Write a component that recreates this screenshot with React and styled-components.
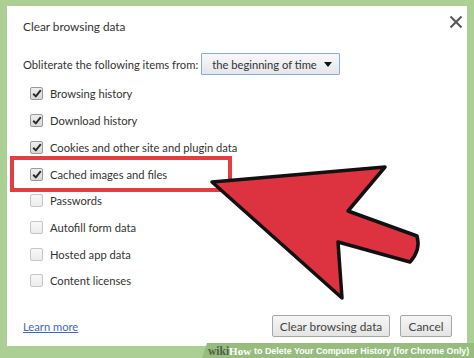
import React from 'react';
import styled, {createGlobalStyle} from 'styled-components';

const GlobalStyle = createGlobalStyle`
  body {
    margin: 0;
    background: #abcf94;
    font-family: Lato, "Open Sans", sans-serif;
  }
`;

const Page = styled.div`
  position: relative;
  width: 474px;
  height: 358px;
  padding: 6px 7px 12px 7px;
  box-sizing: border-box;
  background: #abcf94;
  overflow: hidden;
`;

const Dialog = styled.div`
  position: relative;
  height: 100%;
  background: #fff;
  padding: 0 15px 9px 16px;
  box-sizing: border-box;
  display: flex;
  flex-direction: column;
  color: #333;
  font-family: Lato, "Open Sans", sans-serif;
  font-size: 11.2px;
`;

const Close = styled.div`
  position: absolute;
  top: 9px;
  right: 4px;
  width: 14px;
  height: 14px;
`;

const Title = styled.h1`
  margin: 11px 0 0 0;
  font-size: 11.8px;
  font-weight: 400;
  line-height: 20px;
  color: #333;
`;

const RangeRow = styled.div`
  margin-top: 16px;
  display: flex;
  align-items: center;
  height: 22px;
  gap: 3px;
  white-space: nowrap;
`;

const Select = styled.div`
  width: 139px;
  height: 22px;
  box-sizing: border-box;
  border: 1px solid #8aa9d6;
  border-radius: 1px;
  background: linear-gradient(#f7f8fa, #e4e6ea);
  display: flex;
  align-items: center;
  justify-content: space-between;
  padding: 0 7px 0 10px;
  color: #333;
`;

const Caret = styled.span`
  width: 0;
  height: 0;
  border-left: 4px solid transparent;
  border-right: 4px solid transparent;
  border-top: 5px solid #111;
`;

const List = styled.div`
  margin-top: 5.6px;
  padding-left: 7px;
  display: flex;
  flex-direction: column;
`;

const Row = styled.label`
  position: relative;
  height: 26.7px;
  display: flex;
  align-items: center;
  gap: 7px;
  color: #333;

  ${p => p.$highlight && `
    &::after {
      content: '';
      position: absolute;
      left: -20px;
      top: -5px;
      width: 222px;
      height: 36px;
      border: 4px solid #e33d41;
      box-sizing: border-box;
    }
  `}
`;

const Box = styled.span`
  width: 13px;
  height: 13px;
  box-sizing: border-box;
  border-radius: 2px;
  border: 1px solid ${p => (p.$checked ? '#9a9a9a' : '#c6c6c6')};
  background: ${p => (p.$checked ? 'linear-gradient(#eeeeee, #d8d8d8)' : 'linear-gradient(#f8f8f8, #ececec)')};
  display: flex;
  align-items: center;
  justify-content: center;
`;

const Footer = styled.div`
  margin-top: auto;
  display: flex;
  align-items: center;
  justify-content: space-between;
`;

const Link = styled.a`
  color: #4369b8;
  text-decoration: underline;
`;

const Actions = styled.div`
  display: flex;
  gap: 10px;
`;

const Button = styled.button`
  height: 22px;
  width: ${p => p.$w}px;
  padding: 0;
  border: 1px solid #a6a6a6;
  border-radius: 2px;
  background: linear-gradient(#f6f6f6, #e4e4e4);
  font-family: inherit;
  font-size: 11.8px;
  color: #444;
`;

const Banner = styled.div`
  position: absolute;
  right: 0;
  bottom: 0;
  width: 272px;
  height: 15px;
  background: #96bd7e;
  clip-path: polygon(5px 0, 100% 0, 100% 100%, 0 100%);
  display: flex;
  align-items: center;
  padding-left: 6px;
  box-sizing: border-box;
  font-family: "Liberation Sans", Arial, sans-serif;
  font-weight: 700;
  font-size: 8.9px;
  color: #fff;
  white-space: nowrap;
`;

const Wiki = styled.span`
  font-family: "Liberation Serif", serif;
  font-size: 11.5px;
  color: #4f5e45;
`;

const How = styled.span`
  font-family: "Liberation Serif", serif;
  font-size: 11px;
  margin-right: 3px;
`;

const Overlay = styled.svg`
  position: absolute;
  left: 0;
  top: 0;
  pointer-events: none;
`;

const items = [
  ['Browsing history', true],
  ['Download history', true],
  ['Cookies and other site and plugin data', true],
  ['Cached images and files', true, true],
  ['Passwords', false],
  ['Autofill form data', false],
  ['Hosted app data', false],
  ['Content licenses', false],
];

const Check = () => (
  <svg width="10" height="9" viewBox="0 0 10 9">
    <path d="M1.2 4.8 L3.8 7.4 L8.8 1.2" fill="none" stroke="#2a2a2a" strokeWidth="2" strokeLinejoin="round" />
  </svg>
);

export default function App() {
  return (
    <>
      <GlobalStyle />
      <Page>
        <Dialog>
          <Close>
            <svg width="14" height="14" viewBox="0 0 14 14">
              <path d="M1.5 1.5 L12.5 12.5 M12.5 1.5 L1.5 12.5" stroke="#555" strokeWidth="2" />
            </svg>
          </Close>
          <Title>Clear browsing data</Title>
          <RangeRow>
            Obliterate the following items from:
            <Select>
              the beginning of time
              <Caret />
            </Select>
          </RangeRow>
          <List>
            {items.map(([label, checked, hl]) => (
              <Row key={label} $highlight={hl}>
                <Box $checked={checked}>{checked && <Check />}</Box>
                {label}
              </Row>
            ))}
          </List>
          <Footer>
            <Link href="#">Learn more</Link>
            <Actions>
              <Button $w={118}>Clear browsing data</Button>
              <Button $w={52}>Cancel</Button>
            </Actions>
          </Footer>
        </Dialog>
        <Banner>
          <Wiki>wiki</Wiki>
          <How>How</How>
          to Delete Your Computer History (for Chrome Only)
        </Banner>
        <Overlay width="474" height="358" viewBox="0 0 474 358">
          <path
            d="M212 182 L385 167 L348 211 L417 236 Q421 250 410 262 L338 242 L342 298 Z"
            fill="#dd3340"
            stroke="#111"
            strokeWidth="3.5"
            strokeLinejoin="round"
          />
        </Overlay>
      </Page>
    </>
  );
}
